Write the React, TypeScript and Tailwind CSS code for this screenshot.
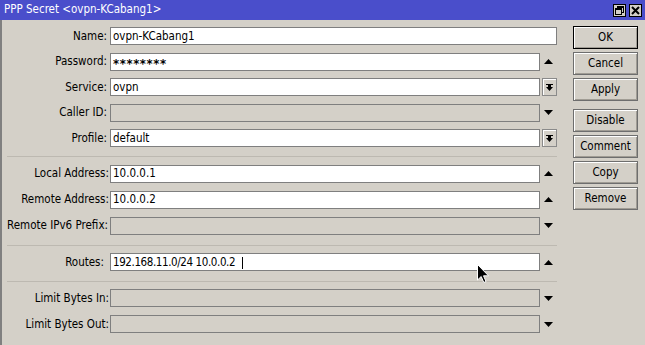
import React from "react";

const FONT = "font-['DejaVu_Sans_Condensed','DejaVu_Sans',sans-serif] font-stretch-condensed";

function UpArrow() {
  return (
    <svg width="9" height="5" viewBox="0 0 9 5"><path d="M4.5 0 L9 5 L0 5 Z" fill="#000" /></svg>
  );
}
function DownArrow() {
  return (
    <svg width="9" height="5" viewBox="0 0 9 5"><path d="M0 0 L9 0 L4.5 5 Z" fill="#000" /></svg>
  );
}
function DropBtn() {
  return (
    <div className="ml-[2px] w-[15px] h-[18px] border border-[#8a8a8a] shadow-[inset_1px_1px_0_#ffffff] bg-[#d4d0c8] flex items-center justify-center">
      <svg width="7" height="7" viewBox="0 0 7 7">
        <rect x="0" y="0" width="7" height="1" fill="#000" />
        <path d="M2 1 L5 1 L5 3 L7 3 L3.5 7 L0 3 L2 3 Z" fill="#000" />
      </svg>
    </div>
  );
}

type Kind = "up" | "down" | "drop" | "none";

function Row({ label, value, kind, disabled, wide, labelPr = 3, caret, secret }: { label: string; value?: string; kind: Kind; disabled?: boolean; wide?: boolean; labelPr?: number; caret?: boolean; secret?: boolean }) {
  return (
    <div className="flex items-center h-[18px]">
      <div className="w-[108px] text-right whitespace-nowrap leading-none pt-px" style={{ paddingRight: labelPr }}>
        {label}
      </div>
      <div
        className={`${wide ? "w-[447px]" : "w-[430px]"} h-[18px] border border-[#7f7f7f] ${disabled ? "bg-[#d4d0c8]" : "bg-white"} pl-[2px] pt-px flex items-center leading-none whitespace-pre`}
      >
        {secret ? (
          <span className="text-[13px] tracking-[0.6px] font-bold pt-[3px]">{value}</span>
        ) : caret ? (
          <span className="tracking-[-0.4px]">{value}</span>
        ) : (
          value
        )}
        {caret && <span className="inline-block w-px h-[12px] bg-black ml-[7px]" />}
      </div>
      {kind === "up" && (
        <div className="w-[17px] flex justify-center"><UpArrow /></div>
      )}
      {kind === "down" && (
        <div className="w-[17px] flex justify-center"><DownArrow /></div>
      )}
      {kind === "drop" && <DropBtn />}
    </div>
  );
}

function Sep({ mt, mb }: { mt: string; mb: string }) {
  return <div className={`${mt} ${mb} ml-[5px] w-[550px] h-px bg-[#bdb9b1]`} />;
}

function Btn({ label, def, mt }: { label: string; def?: boolean; mt?: string }) {
  return (
    <div
      className={`${mt ?? ""} w-[65px] h-[23px] ${def ? "border border-black" : "border border-[#6e6e6e]"} shadow-[inset_1px_1px_0_#ffffff,inset_-1px_-1px_0_#a09c94] flex items-center justify-center leading-none`}
    >
      {label}
    </div>
  );
}

export default function App() {
  return (
    <div className={`w-[645px] h-[345px] bg-[#d4d0c8] text-[11.5px] text-black relative overflow-hidden ${FONT}`}>
      <div className="h-[20px] bg-[#4a4ecb] flex items-center pl-[4px] text-white text-[11.5px] leading-none">
        <span>PPP Secret &lt;ovpn-KCabang1&gt;</span>
        <div className="ml-auto flex gap-[3px] pr-[3px]">
          <div className="w-[13px] h-[13px] bg-[#d4d0c8] border border-black flex items-center justify-center">
            <svg width="9" height="9" viewBox="0 0 9 9">
              <rect x="2.5" y="0.5" width="6" height="6" fill="none" stroke="#000" />
              <rect x="2" y="0" width="7" height="2" fill="#000" />
              <rect x="0.5" y="2.5" width="6" height="6" fill="#d4d0c8" stroke="#000" />
              <rect x="0" y="2" width="7" height="2" fill="#000" />
            </svg>
          </div>
          <div className="w-[13px] h-[13px] bg-[#d4d0c8] border border-black flex items-center justify-center">
            <svg width="9" height="9" viewBox="0 0 9 9">
              <path d="M1 1 L8 8 M8 1 L1 8" stroke="#000" strokeWidth="2" />
            </svg>
          </div>
        </div>
      </div>
      <div className="flex h-[325px] border-l-2 border-[#808080]">
        <div className="w-[571px] flex flex-col pt-[7px]">
          <div className="flex flex-col gap-[7.5px]">
            <Row label="Name:" value="ovpn-KCabang1" kind="none" wide />
            <Row label="Password:" value="********" kind="up" secret />
            <Row label="Service:" value="ovpn" kind="drop" />
            <Row label="Caller ID:" kind="down" disabled />
            <Row label="Profile:" value="default" kind="drop" />
          </div>
          <Sep mt="mt-[9px]" mb="mb-[7.5px]" />
          <div className="flex flex-col gap-[8px]">
            <Row label="Local Address:" value="10.0.0.1" kind="up" labelPr={1} />
            <Row label="Remote Address:" value="10.0.0.2" kind="up" labelPr={1} />
            <Row label="Remote IPv6 Prefix:" kind="down" disabled labelPr={2} />
          </div>
          <Sep mt="mt-[10px]" mb="mb-[7.5px]" />
          <Row label="Routes:" value="192.168.11.0/24 10.0.0.2" kind="up" labelPr={6} caret />
          <Sep mt="mt-[9.5px]" mb="mb-[7.5px]" />
          <div className="flex flex-col gap-[8px]">
            <Row label="Limit Bytes In:" kind="down" disabled labelPr={1} />
            <Row label="Limit Bytes Out:" kind="down" disabled labelPr={1} />
          </div>
        </div>
        <div className="flex flex-col pt-[6px] gap-[3px]">
          <Btn label="OK" def />
          <Btn label="Cancel" />
          <Btn label="Apply" />
          <Btn label="Disable" mt="mt-[5px]" />
          <Btn label="Comment" />
          <Btn label="Copy" />
          <Btn label="Remove" />
        </div>
      </div>
      <svg className="absolute left-[477px] top-[264px]" width="13" height="20" viewBox="0 0 13 20">
        <path d="M0.5 0.5 L0.5 16 L4.2 12.5 L6.8 18.5 L9 17.5 L6.5 11.8 L11.5 11.8 Z" fill="#000" stroke="#fff" strokeWidth="1" strokeLinejoin="round" />
      </svg>
    </div>
  );
}
